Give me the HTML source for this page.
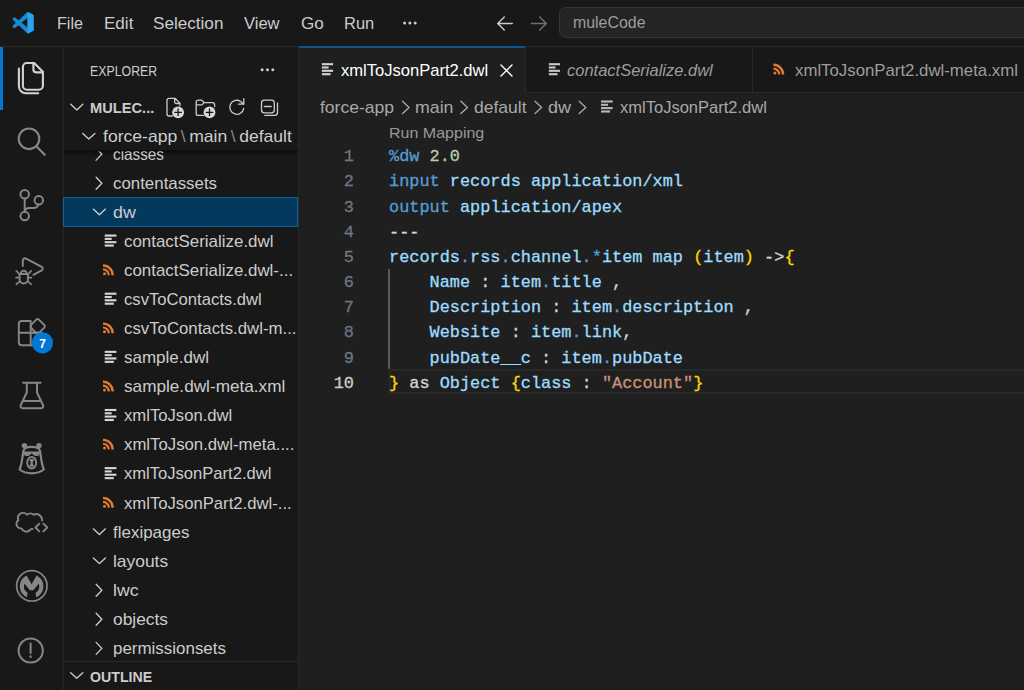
<!DOCTYPE html>
<html>
<head>
<meta charset="utf-8">
<title>muleCode</title>
<style>
*{box-sizing:border-box;margin:0;padding:0}
html,body{width:1024px;height:690px;overflow:hidden;background:#1f1f1f}
body{font-family:"Liberation Sans",sans-serif;color:#cccccc;position:relative}
.abs{position:absolute}
.t{position:absolute;white-space:pre;transform-origin:0 50%}
svg{position:absolute;overflow:visible}
#titlebar{left:0;top:0;width:1024px;height:46px;background:#181818}
#activity{left:0;top:46px;width:63px;height:644px;background:#181818}
#sidebar{left:64px;top:46px;width:234px;height:644px;background:#181818}
#tabs{left:299px;top:46px;width:725px;height:46px;background:#181818}
.hl{background:#292929}
.code{-webkit-text-stroke:0.3px;font-family:"Liberation Mono",monospace;font-size:16.9px;line-height:25px;height:25px;white-space:pre;position:absolute;left:389px;color:#d4d4d4}
.ln{-webkit-text-stroke:0.3px;font-family:"Liberation Mono",monospace;font-size:16.9px;line-height:25px;height:25px;position:absolute;left:304px;width:50px;text-align:right;color:#6e7681}
.k{color:#569cd6}.v{color:#9cdcfe}.n{color:#b5cea8}.s{color:#ce9178}.y{color:#ffd700}
.ic{fill:none;stroke:#868686;stroke-width:1.6;stroke-linecap:round;stroke-linejoin:round}
</style>
</head>
<body>
<!-- ===== backgrounds ===== -->
<div id="titlebar" class="abs"></div>
<div id="activity" class="abs"></div>
<div id="sidebar" class="abs"></div>
<div id="tabs" class="abs"></div>
<!-- borders -->
<div class="abs hl" style="left:0;top:46px;width:1024px;height:1px"></div>
<div class="abs" style="left:62px;top:47px;width:1px;height:643px;background:#1e1e1e"></div><div class="abs" style="left:63px;top:47px;width:1px;height:643px;background:#242424"></div>
<div class="abs hl" style="left:298px;top:47px;width:1px;height:643px"></div>
<div class="abs hl" style="left:299px;top:92px;width:725px;height:1px"></div>
<!-- active tab -->
<div class="abs" style="left:299px;top:46px;width:226px;height:47px;background:#1f1f1f"></div>
<div class="abs" style="left:299px;top:46px;width:226px;height:2px;background:#0d548c"></div>
<div class="abs hl" style="left:525px;top:47px;width:1px;height:46px"></div>
<div class="abs hl" style="left:752px;top:47px;width:1px;height:46px"></div>
<!-- search box -->
<div class="abs" style="left:559px;top:7px;width:480px;height:31px;background:#242424;border:1px solid #353535;border-radius:7px"></div>
<!-- activity indicator -->
<div class="abs" style="left:0;top:46.5px;width:2.7px;height:63.5px;background:#0078d4"></div>
<!-- selected row -->
<div class="abs" style="left:63px;top:197px;width:235px;height:29.700px;background:#04395e;border:1.700px solid #0a64aa;border-radius:1px"></div>
<!-- sticky header shadow -->
<div class="abs" style="left:64px;top:150px;width:234px;height:6px;background:linear-gradient(#0c0c0c,rgba(24,24,24,0))"></div>
<!-- badge number -->
<div class="abs" style="left:32.5px;top:333.800px;width:20px;height:20px;line-height:20px;text-align:center;font-size:12px;font-weight:bold;color:#fff;z-index:5">7</div>
<!-- outline header border -->
<div class="abs hl" style="left:64px;top:661px;width:234px;height:1px"></div>

<!-- ===== code ===== -->
<div class="abs" style="left:388.600px;top:368.500px;width:660px;height:25.100px;border:2.300px solid #282828"></div>
<div class="abs" style="left:388.300px;top:268.500px;width:1.900px;height:100.200px;background:#5a5a5a"></div>
<div class="ln" style="top:144.1px">1</div>
<div class="ln" style="top:169.3px">2</div>
<div class="ln" style="top:194.5px">3</div>
<div class="ln" style="top:219.7px">4</div>
<div class="ln" style="top:244.9px">5</div>
<div class="ln" style="top:270.1px">6</div>
<div class="ln" style="top:295.2px">7</div>
<div class="ln" style="top:320.4px">8</div>
<div class="ln" style="top:345.6px">9</div>
<div class="ln" style="top:370.8px;color:#cccccc">10</div>
<div class="code" style="top:144.1px"><span class="k">%dw</span> <span class="n">2.0</span></div>
<div class="code" style="top:169.3px"><span class="k">input</span> <span class="v">records</span> <span class="v">application/xml</span></div>
<div class="code" style="top:194.5px"><span class="k">output</span> <span class="v">application/apex</span></div>
<div class="code" style="top:219.7px">---</div>
<div class="code" style="top:244.9px"><span class="v">records</span><span class="k">.</span><span class="v">rss</span><span class="k">.</span><span class="v">channel</span><span class="k">.*</span><span class="v">item</span> <span class="v">map</span> <span class="y">(</span><span class="v">item</span><span class="y">)</span> -&gt;<span class="y">{</span></div>
<div class="code" style="top:270.1px">    <span class="v">Name</span> : <span class="v">item</span><span class="k">.</span><span class="v">title</span> ,</div>
<div class="code" style="top:295.2px">    <span class="v">Description</span> : <span class="v">item</span><span class="k">.</span><span class="v">description</span> ,</div>
<div class="code" style="top:320.4px">    <span class="v">Website</span> : <span class="v">item</span><span class="k">.</span><span class="v">link</span>,</div>
<div class="code" style="top:345.6px">    <span class="v">pubDate__c</span> : <span class="v">item</span><span class="k">.</span><span class="v">pubDate</span></div>
<div class="code" style="top:370.8px"><span class="y">}</span> as <span class="v">Object</span> <span class="y">{</span><span class="v">class</span> : <span class="s">"Account"</span><span class="y">}</span></div>

<svg class="abs" style="left:0;top:0" width="1024" height="690" viewBox="0 0 1024 690">
<svg x="12.2" y="12.1" width="21.5" height="21.3" viewBox="3 0 101.5 100" preserveAspectRatio="none"><path fill="#1888d3" fill-rule="evenodd" d="M74.9 99.3c1.6.6 3.4.6 5-.2l20.6-9.9c2.2-1 3.500-3.200 3.500-5.600V16.400c0-2.400-1.400-4.600-3.500-5.600L79.900.9c-2.100-1-4.500-.8-6.400.6-.3.200-.5.400-.7.600L33.400 38 16.200 25c-1.600-1.200-3.800-1.100-5.300.2l-5.500 5c-1.800 1.700-1.800 4.500 0 6.200L20.300 50 5.400 63.600c-1.800 1.700-1.800 4.500 0 6.200l5.500 5c1.500 1.400 3.700 1.500 5.300.2l17.200-13 39.400 36c.6.600 1.300 1.100 2.100 1.400zM79.500 24.500L47.500 50 79.500 75.500V24.500z"/><path fill="#27a4f2" d="M79 .5 C77.500 .2 76 .300 74.500 1 L74.500 99 C76 99.700 78 99.700 79.900 99.100l20.600-9.900c2.200-1 3.500-3.200 3.500-5.600V16.400c0-2.400-1.400-4.600-3.500-5.600L79.900.9z"/></svg>
<circle cx="404.6" cy="23.1" r="1.5" fill="#cccccc"/>
<circle cx="409.9" cy="23.1" r="1.5" fill="#cccccc"/>
<circle cx="415.2" cy="23.1" r="1.5" fill="#cccccc"/>
<path d="M512.300 23.500H498 M504.300 16.900 L497.700 23.500 L504.300 30.100" fill="none" stroke="#cccccc" stroke-width="1.4" stroke-linecap="round" stroke-linejoin="round"/>
<path d="M531.500 23.500H546 M539.700 16.900 L546.300 23.500 L539.700 30.100" fill="none" stroke="#727272" stroke-width="1.4" stroke-linecap="round" stroke-linejoin="round"/>
<path d="M26.9 63 H34.2 L42.9 71.7 V85.800 a4 4 0 0 1 -4 4 H26.900 a4 4 0 0 1 -4 -4 V67 a4 4 0 0 1 4 -4 Z" fill="none" stroke="#d2d2d2" stroke-width="2.1" stroke-linecap="round" stroke-linejoin="round" />
<path d="M33.4 63.3 V69.600 a2.800 2.800 0 0 0 2.800 2.800 H42.600" fill="none" stroke="#d2d2d2" stroke-width="2.1" stroke-linecap="round" stroke-linejoin="round" />
<path d="M18.9 68.6 V86.200 a7 7 0 0 0 7 7 H38.200" fill="none" stroke="#d2d2d2" stroke-width="2.1" stroke-linecap="round" stroke-linejoin="round" />
<circle cx="29" cy="138.8" r="10.3" fill="none" stroke="#868686" stroke-width="2.1"/>
<path d="M36.4 146.2 L44.700 154.800" fill="none" stroke="#868686" stroke-width="2.1" stroke-linecap="round" stroke-linejoin="round" />
<circle cx="24.7" cy="194.2" r="4.25" fill="none" stroke="#868686" stroke-width="2"/>
<circle cx="38.8" cy="200.3" r="4.25" fill="none" stroke="#868686" stroke-width="2"/>
<circle cx="24.7" cy="216.1" r="4.25" fill="none" stroke="#868686" stroke-width="2"/>
<path d="M24.7 198.5 V211.800 M38.300 204.600 C37.800 207.800 35.500 207.900 33 207.900 H29.500 C26.500 207.900 24.700 209.300 24.700 211.800" fill="none" stroke="#868686" stroke-width="2" stroke-linecap="round" stroke-linejoin="round" />
<path d="M22.8 266 V260.600 a2.200 2.200 0 0 1 3.300 -1.900 L41.700 266.800 a2 2 0 0 1 0 3.500 L33.400 274.800" fill="none" stroke="#868686" stroke-width="2" stroke-linecap="round" stroke-linejoin="round" />
<path d="M19.6 274 H27.900 V279.300 a4.150 4.150 0 0 1 -8.300 0 Z M20.700 274 a3.050 3.300 0 0 1 6.100 0" fill="none" stroke="#868686" stroke-width="1.9" stroke-linecap="round" stroke-linejoin="round" />
<path d="M16.300 270.900 L19.400 274.300 M16.100 277.600 H19.400 M16.300 284.300 L19.600 281.300 M31.200 270.900 L28.100 274.300 M31.400 277.600 H28.100 M31.200 284.300 L27.900 281.300" fill="none" stroke="#868686" stroke-width="1.7" stroke-linecap="round" stroke-linejoin="round" />
<path d="M30.700 321 H21.800 a3 3 0 0 0 -3 3 V342.300 a3 3 0 0 0 3 3 H30.700 Z M18.800 332.700 H38" fill="none" stroke="#868686" stroke-width="1.9" stroke-linecap="round" stroke-linejoin="round" />
<path d="M30.700 332.700 H42 V345.300 H30.700" fill="none" stroke="#868686" stroke-width="1.9" stroke-linecap="round" stroke-linejoin="round" />
<path d="M36.300 319.600 a1.800 1.800 0 0 1 2.600 0 L44.300 325 a1.800 1.800 0 0 1 0 2.600 L38.900 333 a1.800 1.800 0 0 1 -2.600 0 L30.700 327.400 V325.200 Z" fill="none" stroke="#868686" stroke-width="1.9" stroke-linecap="round" stroke-linejoin="round" />
<circle cx="42.5" cy="342.8" r="10.6" fill="#0078d4"/>
<path d="M23.1 382.700 H40.600 M26.800 382.700 V392.500 L20.700 405.300 a2.100 2.100 0 0 0 1.900 3 H41.200 a2.100 2.100 0 0 0 1.900 -3 L37 392.500 V382.700 M23.600 400.900 H40.200" fill="none" stroke="#868686" stroke-width="2" stroke-linecap="round" stroke-linejoin="round" />
<circle cx="24.4" cy="445.6" r="2.7" fill="#868686"/><circle cx="39" cy="445.600" r="2.700" fill="#868686"/>
<path d="M23.400 451 C24.500 445.400 38.900 445.400 40 451 C40.700 455 41.100 459 41.800 462.500 C42.300 465 43 467.500 43.800 469.500 C37.500 474.600 25.900 474.600 19.600 469.500 C20.400 467.500 21.100 465 21.600 462.500 C22.300 459 22.700 455 23.400 451 Z" fill="none" stroke="#868686" stroke-width="2.2" stroke-linecap="round" stroke-linejoin="round" />
<path d="M23.700 451.400 H39.700 V453.800 C39.700 456 36.300 456.400 34.700 455.800 C33.600 455.400 32.700 454.400 31.700 453.300 C30.700 454.400 29.800 455.400 28.700 455.800 C27.100 456.400 23.700 456 23.700 453.800 Z" fill="#868686"/>
<ellipse cx="31.700" cy="462.700" rx="4.500" ry="5.800" fill="none" stroke="#868686" stroke-width="1.900"/>
<path d="M29.500 460 C29.500 458.300 33.900 458.300 33.900 460 C33.900 461.200 32.800 461.400 32.800 462.400 V463.400 C32.800 464.400 34.100 464.700 34.100 465.700 C34.100 467.200 29.300 467.200 29.300 465.700 C29.300 464.700 30.600 464.400 30.600 463.400 V462.400 C30.600 461.400 29.500 461.200 29.500 460 Z" fill="#868686"/>
<path d="M32.500 529 C31.200 528.600 30.800 529.300 30 530 C28.500 531.600 26.500 532 24.500 531.200 C23 530.600 22 529.500 21.500 528.400 C18.500 528.600 16.300 526.300 16.400 523.500 C16.500 522 17.300 520.800 18.400 520.100 C17.500 518 18 515.500 19.800 514 C22 512.200 25.500 512.500 27.200 514.800 C28.800 513 31.800 512.800 33.800 514.800 C36 513.700 38.800 514.200 40.500 516 C41.700 517.300 42.100 518.900 42.100 520.600" fill="none" stroke="#868686" stroke-width="1.9" stroke-linecap="round" stroke-linejoin="round" />
<path d="M39.300 523.700 L35.500 527.500 L39.300 531.300 M43.400 523.700 L47.200 527.500 L43.400 531.300" fill="none" stroke="#868686" stroke-width="1.9" stroke-linecap="round" stroke-linejoin="round" />
<circle cx="31.850" cy="585.800" r="15.200" fill="none" stroke="#868686" stroke-width="1.700"/>
<path d="M26.99 597.16 A11.8 11.8 0 0 1 25.00 576.52 L26.6 575.6 L31.6 584.3 L36.600 575.600 L38.20 576.52 A11.8 11.8 0 0 1 36.21 597.16 L35.63 592.75 A7.6 7.6 0 0 0 38.74 583.70 L33.300 590.300 H29.900 L24.46 583.70 A7.6 7.6 0 0 0 27.57 592.75 Z" fill="#868686"/>
<circle cx="30.700" cy="650.500" r="12.100" fill="none" stroke="#868686" stroke-width="2"/>
<path d="M30.600 643.500 V653" fill="none" stroke="#868686" stroke-width="2" stroke-linecap="round" stroke-linejoin="round" />
<rect x="29.500" y="655.500" width="2.200" height="2.200" fill="#868686"/>
<circle cx="262.1" cy="69.700" r="1.500" fill="#cccccc"/>
<circle cx="267.45" cy="69.700" r="1.500" fill="#cccccc"/>
<circle cx="272.8" cy="69.700" r="1.500" fill="#cccccc"/>
<path d="M70.75 104.30 L76.80 109.90 L82.85 104.30" fill="none" stroke="#cccccc" stroke-width="1.35" stroke-linecap="round" stroke-linejoin="round" />
<path d="M82.75 133.50 L88.80 139.10 L94.85 133.50" fill="none" stroke="#cccccc" stroke-width="1.35" stroke-linecap="round" stroke-linejoin="round" />
<path d="M70.65 672.70 L76.70 678.30 L82.75 672.70" fill="none" stroke="#cccccc" stroke-width="1.35" stroke-linecap="round" stroke-linejoin="round" />
<clipPath id="cc"><rect x="64" y="151.400" width="234" height="30"/></clipPath><g clip-path="url(#cc)">
<path d="M96.15 148.16 L101.85 154.16 L96.15 160.16" fill="none" stroke="#cccccc" stroke-width="1.35" stroke-linecap="round" stroke-linejoin="round" />
</g>
<path d="M96.15 177.23 L101.85 183.23 L96.15 189.23" fill="none" stroke="#cccccc" stroke-width="1.35" stroke-linecap="round" stroke-linejoin="round" />
<path d="M93.35 209.10 L99.40 214.70 L105.45 209.10" fill="none" stroke="#cccccc" stroke-width="1.35" stroke-linecap="round" stroke-linejoin="round" />
<path d="M93.35 528.87 L99.40 534.47 L105.45 528.87" fill="none" stroke="#cccccc" stroke-width="1.35" stroke-linecap="round" stroke-linejoin="round" />
<path d="M93.35 557.94 L99.40 563.54 L105.45 557.94" fill="none" stroke="#cccccc" stroke-width="1.35" stroke-linecap="round" stroke-linejoin="round" />
<path d="M96.15 584.21 L101.85 590.21 L96.15 596.21" fill="none" stroke="#cccccc" stroke-width="1.35" stroke-linecap="round" stroke-linejoin="round" />
<path d="M96.15 613.28 L101.85 619.28 L96.15 625.28" fill="none" stroke="#cccccc" stroke-width="1.35" stroke-linecap="round" stroke-linejoin="round" />
<path d="M96.15 642.35 L101.85 648.35 L96.15 654.35" fill="none" stroke="#cccccc" stroke-width="1.35" stroke-linecap="round" stroke-linejoin="round" />
<rect x="104.7" y="234.52" width="11.70" height="2.100" fill="#d4d7d6"/>
<rect x="104.7" y="237.82" width="7.00" height="2.100" fill="#d4d7d6"/>
<rect x="104.7" y="241.12" width="11.70" height="2.100" fill="#d4d7d6"/>
<rect x="104.7" y="244.52" width="9.10" height="2.100" fill="#d4d7d6"/>
<rect x="104.7" y="292.66" width="11.70" height="2.100" fill="#d4d7d6"/>
<rect x="104.7" y="295.96" width="7.00" height="2.100" fill="#d4d7d6"/>
<rect x="104.7" y="299.26" width="11.70" height="2.100" fill="#d4d7d6"/>
<rect x="104.7" y="302.66" width="9.10" height="2.100" fill="#d4d7d6"/>
<rect x="104.7" y="350.80" width="11.70" height="2.100" fill="#d4d7d6"/>
<rect x="104.7" y="354.10" width="7.00" height="2.100" fill="#d4d7d6"/>
<rect x="104.7" y="357.40" width="11.70" height="2.100" fill="#d4d7d6"/>
<rect x="104.7" y="360.80" width="9.10" height="2.100" fill="#d4d7d6"/>
<rect x="104.7" y="408.94" width="11.70" height="2.100" fill="#d4d7d6"/>
<rect x="104.7" y="412.24" width="7.00" height="2.100" fill="#d4d7d6"/>
<rect x="104.7" y="415.54" width="11.70" height="2.100" fill="#d4d7d6"/>
<rect x="104.7" y="418.94" width="9.10" height="2.100" fill="#d4d7d6"/>
<rect x="104.7" y="467.08" width="11.70" height="2.100" fill="#d4d7d6"/>
<rect x="104.7" y="470.38" width="7.00" height="2.100" fill="#d4d7d6"/>
<rect x="104.7" y="473.68" width="11.70" height="2.100" fill="#d4d7d6"/>
<rect x="104.7" y="477.08" width="9.10" height="2.100" fill="#d4d7d6"/>
<g transform="translate(103.00 275.14) scale(1.0)"><circle cx="1.500" cy="-1.500" r="1.500" fill="#e37933"/><path d="M0 -6.900 A6.900 6.900 0 0 1 6.900 0 H4.700 A4.700 4.700 0 0 0 0 -4.700 Z" fill="#e37933"/><path d="M0 -10.900 A10.900 10.900 0 0 1 10.900 0 H8.500 A8.500 8.500 0 0 0 0 -8.500 Z" fill="#e37933"/></g>
<g transform="translate(103.00 333.28) scale(1.0)"><circle cx="1.500" cy="-1.500" r="1.500" fill="#e37933"/><path d="M0 -6.900 A6.900 6.900 0 0 1 6.900 0 H4.700 A4.700 4.700 0 0 0 0 -4.700 Z" fill="#e37933"/><path d="M0 -10.900 A10.900 10.900 0 0 1 10.900 0 H8.500 A8.500 8.500 0 0 0 0 -8.500 Z" fill="#e37933"/></g>
<g transform="translate(103.00 391.42) scale(1.0)"><circle cx="1.500" cy="-1.500" r="1.500" fill="#e37933"/><path d="M0 -6.900 A6.900 6.900 0 0 1 6.900 0 H4.700 A4.700 4.700 0 0 0 0 -4.700 Z" fill="#e37933"/><path d="M0 -10.900 A10.900 10.900 0 0 1 10.900 0 H8.500 A8.500 8.500 0 0 0 0 -8.500 Z" fill="#e37933"/></g>
<g transform="translate(103.00 449.56) scale(1.0)"><circle cx="1.500" cy="-1.500" r="1.500" fill="#e37933"/><path d="M0 -6.900 A6.900 6.900 0 0 1 6.900 0 H4.700 A4.700 4.700 0 0 0 0 -4.700 Z" fill="#e37933"/><path d="M0 -10.900 A10.900 10.900 0 0 1 10.900 0 H8.500 A8.500 8.500 0 0 0 0 -8.500 Z" fill="#e37933"/></g>
<g transform="translate(103.00 507.70) scale(1.0)"><circle cx="1.500" cy="-1.500" r="1.500" fill="#e37933"/><path d="M0 -6.900 A6.900 6.900 0 0 1 6.900 0 H4.700 A4.700 4.700 0 0 0 0 -4.700 Z" fill="#e37933"/><path d="M0 -10.900 A10.900 10.900 0 0 1 10.900 0 H8.500 A8.500 8.500 0 0 0 0 -8.500 Z" fill="#e37933"/></g>
<rect x="321.9" y="63.15" width="11.20" height="2.100" fill="#d4d4d4"/>
<rect x="321.9" y="66.45" width="6.70" height="2.100" fill="#d4d4d4"/>
<rect x="321.9" y="69.75" width="11.20" height="2.100" fill="#d4d4d4"/>
<rect x="321.9" y="73.15" width="8.71" height="2.100" fill="#d4d4d4"/>
<rect x="548.8" y="63.15" width="11.20" height="2.100" fill="#c8c8c8"/>
<rect x="548.8" y="66.45" width="6.70" height="2.100" fill="#c8c8c8"/>
<rect x="548.8" y="69.75" width="11.20" height="2.100" fill="#c8c8c8"/>
<rect x="548.8" y="73.15" width="8.71" height="2.100" fill="#c8c8c8"/>
<g transform="translate(773.40 74.50) scale(1.0)"><circle cx="1.500" cy="-1.500" r="1.500" fill="#e37933"/><path d="M0 -6.900 A6.900 6.900 0 0 1 6.900 0 H4.700 A4.700 4.700 0 0 0 0 -4.700 Z" fill="#e37933"/><path d="M0 -10.900 A10.900 10.900 0 0 1 10.900 0 H8.500 A8.500 8.500 0 0 0 0 -8.500 Z" fill="#e37933"/></g>
<rect x="601.0" y="100.45" width="11.70" height="2.100" fill="#b8b8b8"/>
<rect x="601.0" y="103.75" width="7.00" height="2.100" fill="#b8b8b8"/>
<rect x="601.0" y="107.05" width="11.70" height="2.100" fill="#b8b8b8"/>
<rect x="601.0" y="110.45" width="9.10" height="2.100" fill="#b8b8b8"/>
<path d="M501 65 L512 76 M512 65 L501 76" fill="none" stroke="#ffffff" stroke-width="1.4" stroke-linecap="round" stroke-linejoin="round" />
<path d="M402.50 101.300 L409.10 107.400 L402.50 113.500" fill="none" stroke="#a9a9a9" stroke-width="1.35" stroke-linecap="round" stroke-linejoin="round" />
<path d="M460.90 101.300 L467.50 107.400 L460.90 113.500" fill="none" stroke="#a9a9a9" stroke-width="1.35" stroke-linecap="round" stroke-linejoin="round" />
<path d="M535.00 101.300 L541.60 107.400 L535.00 113.500" fill="none" stroke="#a9a9a9" stroke-width="1.35" stroke-linecap="round" stroke-linejoin="round" />
<path d="M579.20 101.300 L585.80 107.400 L579.20 113.500" fill="none" stroke="#a9a9a9" stroke-width="1.35" stroke-linecap="round" stroke-linejoin="round" />
<path d="M172.500 116 H169 a2 2 0 0 1 -2 -2 V100.300 a2 2 0 0 1 2 -2 H175 L180 103.300 V105.500 M174.700 98.500 V102 a1.500 1.500 0 0 0 1.500 1.500 H179.800" fill="none" stroke="#cccccc" stroke-width="1.3" stroke-linecap="round" stroke-linejoin="round" />
<circle cx="178.100" cy="112.300" r="5.900" fill="#d8d8d8"/>
<path d="M174.800 112.300 H181.400 M178.100 109 V115.600" fill="none" stroke="#181818" stroke-width="1.3" stroke-linecap="round" stroke-linejoin="round" />
<path d="M203.500 115.400 H198.200 a2 2 0 0 1 -2 -2 V102.200 a2 2 0 0 1 2 -2 H201.300 a1.500 1.500 0 0 1 1.100 .500 L204 102.700 H212.600 a2 2 0 0 1 2 2 V106.500 M196.200 104.900 H201.500 a1.500 1.500 0 0 0 1.100 -.500 L204 102.700" fill="none" stroke="#cccccc" stroke-width="1.3" stroke-linecap="round" stroke-linejoin="round" />
<circle cx="209.500" cy="112.300" r="5.900" fill="#d8d8d8"/>
<path d="M206.200 112.300 H212.800 M209.500 109 V115.600" fill="none" stroke="#181818" stroke-width="1.3" stroke-linecap="round" stroke-linejoin="round" />
<path d="M243.700 108.400 A7 7 0 1 1 240.300 101.200 L243.800 104.200 M243.800 98.700 V104.200 H238.500" fill="none" stroke="#cccccc" stroke-width="1.3" stroke-linecap="round" stroke-linejoin="round" />
<rect x="261.500" y="100.100" width="12.800" height="12.800" rx="2.800" fill="none" stroke="#cccccc" stroke-width="1.300"/>
<path d="M264.400 106.500 H271.200" fill="none" stroke="#cccccc" stroke-width="1.3" stroke-linecap="round" stroke-linejoin="round" />
<path d="M277.500 103 V112.600 a2.800 2.800 0 0 1 -2.800 2.800 H264.800" fill="none" stroke="#cccccc" stroke-width="1.3" stroke-linecap="round" stroke-linejoin="round" />
</svg>

<div class="t" id="t0" style="left:56.90px;top:11.07px;font-size:16.4px;color:#cccccc;line-height:24px;height:24px;transform:scaleX(0.9840);">File</div>
<div class="t" id="t1" style="left:103.90px;top:11.07px;font-size:16.4px;color:#cccccc;line-height:24px;height:24px;transform:scaleX(1.0401);">Edit</div>
<div class="t" id="t2" style="left:153.40px;top:11.07px;font-size:16.4px;color:#cccccc;line-height:24px;height:24px;transform:scaleX(1.0440);">Selection</div>
<div class="t" id="t3" style="left:243.90px;top:11.07px;font-size:16.4px;color:#cccccc;line-height:24px;height:24px;transform:scaleX(1.0097);">View</div>
<div class="t" id="t4" style="left:300.90px;top:11.07px;font-size:16.4px;color:#cccccc;line-height:24px;height:24px;transform:scaleX(1.0430);">Go</div>
<div class="t" id="t5" style="left:344.40px;top:11.07px;font-size:16.4px;color:#cccccc;line-height:24px;height:24px;transform:scaleX(1.0055);">Run</div>
<div class="t" id="t6" style="left:572.90px;top:10.84px;font-size:15.6px;color:#9d9d9d;line-height:24px;height:24px;transform:scaleX(1.0196);">muleCode</div>
<div class="t" id="t7" style="left:89.90px;top:58.71px;font-size:14.7px;color:#cccccc;line-height:24px;height:24px;transform:scaleX(0.8402);">EXPLORER</div>
<div class="t" id="t8" style="left:89.90px;top:95.91px;font-size:14.4px;color:#cccccc;line-height:24px;height:24px;font-weight:bold;transform:scaleX(1.0178);">MULEC...</div>
<div class="t" id="t9" style="left:103.00px;top:124.95px;font-size:16.6px;color:#cccccc;line-height:24px;height:24px;transform:scaleX(1.0585);">force-app<span style="color:#8a8a8a"> \ </span>main<span style="color:#8a8a8a"> \ </span>default</div>
<div class="t" id="t10" style="left:113.40px;top:142.71px;font-size:16.6px;color:#cccccc;line-height:24px;height:24px;transform:scaleX(0.9215);clip-path:inset(8.6px 0 0 0);">classes</div>
<div class="t" id="t11" style="left:113.40px;top:171.78px;font-size:16.6px;color:#cccccc;line-height:24px;height:24px;transform:scaleX(1.0162);">contentassets</div>
<div class="t" id="t12" style="left:113.40px;top:200.85px;font-size:16.6px;color:#cccccc;line-height:24px;height:24px;transform:scaleX(1.0722);">dw</div>
<div class="t" id="t13" style="left:123.90px;top:229.92px;font-size:16.6px;color:#cccccc;line-height:24px;height:24px;transform:scaleX(1.0192);">contactSerialize.dwl</div>
<div class="t" id="t14" style="left:123.90px;top:258.99px;font-size:16.6px;color:#cccccc;line-height:24px;height:24px;transform:scaleX(1.0185);">contactSerialize.dwl-...</div>
<div class="t" id="t15" style="left:123.90px;top:288.06px;font-size:16.6px;color:#cccccc;line-height:24px;height:24px;transform:scaleX(1.0025);">csvToContacts.dwl</div>
<div class="t" id="t16" style="left:123.90px;top:317.13px;font-size:16.6px;color:#cccccc;line-height:24px;height:24px;transform:scaleX(1.0109);">csvToContacts.dwl-m...</div>
<div class="t" id="t17" style="left:123.90px;top:346.20px;font-size:16.6px;color:#cccccc;line-height:24px;height:24px;transform:scaleX(1.0242);">sample.dwl</div>
<div class="t" id="t18" style="left:123.90px;top:375.27px;font-size:16.6px;color:#cccccc;line-height:24px;height:24px;transform:scaleX(1.0350);">sample.dwl-meta.xml</div>
<div class="t" id="t19" style="left:123.90px;top:404.34px;font-size:16.6px;color:#cccccc;line-height:24px;height:24px;transform:scaleX(1.0036);">xmlToJson.dwl</div>
<div class="t" id="t20" style="left:123.90px;top:433.41px;font-size:16.6px;color:#cccccc;line-height:24px;height:24px;transform:scaleX(1.0098);">xmlToJson.dwl-meta....</div>
<div class="t" id="t21" style="left:123.90px;top:462.48px;font-size:16.6px;color:#cccccc;line-height:24px;height:24px;">xmlToJsonPart2.dwl</div>
<div class="t" id="t22" style="left:123.90px;top:491.55px;font-size:16.6px;color:#cccccc;line-height:24px;height:24px;transform:scaleX(1.0045);">xmlToJsonPart2.dwl-...</div>
<div class="t" id="t23" style="left:113.40px;top:520.62px;font-size:16.6px;color:#cccccc;line-height:24px;height:24px;transform:scaleX(1.0219);">flexipages</div>
<div class="t" id="t24" style="left:113.40px;top:549.69px;font-size:16.6px;color:#cccccc;line-height:24px;height:24px;transform:scaleX(1.0492);">layouts</div>
<div class="t" id="t25" style="left:113.40px;top:578.76px;font-size:16.6px;color:#cccccc;line-height:24px;height:24px;transform:scaleX(1.0626);">lwc</div>
<div class="t" id="t26" style="left:113.40px;top:607.83px;font-size:16.6px;color:#cccccc;line-height:24px;height:24px;transform:scaleX(1.0467);">objects</div>
<div class="t" id="t27" style="left:113.40px;top:636.90px;font-size:16.6px;color:#cccccc;line-height:24px;height:24px;transform:scaleX(1.0207);">permissionsets</div>
<div class="t" id="t28" style="left:89.60px;top:664.91px;font-size:14.4px;color:#cccccc;line-height:24px;height:24px;font-weight:bold;transform:scaleX(0.9835);">OUTLINE</div>
<div class="t" id="t29" style="left:340.65px;top:58.75px;font-size:16.6px;color:#ffffff;line-height:24px;height:24px;transform:scaleX(0.9977);">xmlToJsonPart2.dwl</div>
<div class="t" id="t30" style="left:567.40px;top:58.75px;font-size:16.6px;color:#9d9d9d;line-height:24px;height:24px;font-style:italic;transform:scaleX(0.9938);">contactSerialize.dwl</div>
<div class="t" id="t31" style="left:795.00px;top:58.75px;font-size:16.6px;color:#9d9d9d;line-height:24px;height:24px;transform:scaleX(1.0117);">xmlToJsonPart2.dwl-meta.xml</div>
<div class="t" id="t32" style="left:319.65px;top:96.00px;font-size:16.6px;color:#a9a9a9;line-height:24px;height:24px;transform:scaleX(1.0564);">force-app</div>
<div class="t" id="t33" style="left:415.40px;top:96.00px;font-size:16.6px;color:#a9a9a9;line-height:24px;height:24px;transform:scaleX(1.0693);">main</div>
<div class="t" id="t34" style="left:473.65px;top:96.00px;font-size:16.6px;color:#a9a9a9;line-height:24px;height:24px;transform:scaleX(1.0564);">default</div>
<div class="t" id="t35" style="left:547.80px;top:96.00px;font-size:16.6px;color:#a9a9a9;line-height:24px;height:24px;transform:scaleX(1.0855);">dw</div>
<div class="t" id="t36" style="left:620.40px;top:96.00px;font-size:16.6px;color:#a9a9a9;line-height:24px;height:24px;transform:scaleX(0.9955);">xmlToJsonPart2.dwl</div>
<div class="t" id="t37" style="left:389.40px;top:120.71px;font-size:14.4px;color:#999999;line-height:24px;height:24px;transform:scaleX(1.1128);">Run Mapping</div>
</body>
</html>
